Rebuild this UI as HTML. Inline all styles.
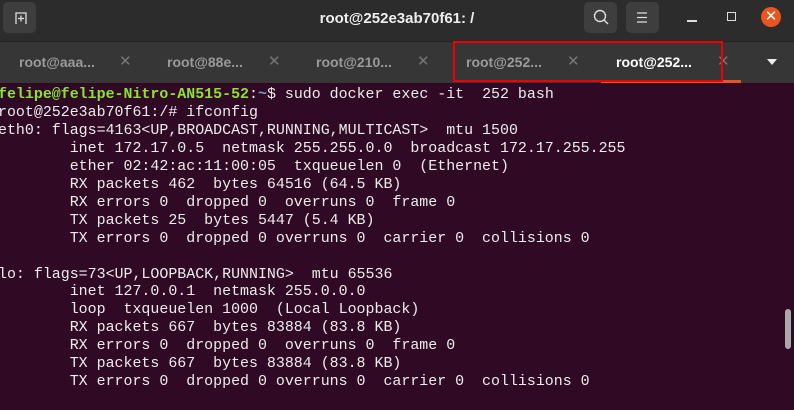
<!DOCTYPE html><html><head><style>
body{margin:0;width:794px;height:410px;overflow:hidden;background:#300a24;font-family:"Liberation Sans",sans-serif;position:relative}
.hdr{position:absolute;left:0;top:0;width:794px;height:41px;background:#2c2c2c}
.tabs{position:absolute;left:0;top:41px;width:794px;height:41px;background:#363636;border-top:1px solid #222}
.btn{position:absolute;top:2px;width:33px;height:31px;background:#3e3e3e;border-radius:5px}
.title{position:absolute;top:10px;left:0;width:794px;text-align:center;color:#eee;font-weight:bold;font-size:15px}
.tab{position:absolute;top:12px;color:#9a9a9a;font-weight:bold;font-size:14px}
.x{position:absolute;top:10px;color:#777;font-size:15px}
pre{position:absolute;left:-2px;top:87px;margin:0;font-family:"Liberation Mono",monospace;font-size:14.95px;line-height:17.95px;color:#ececec}
.g{color:#8ae234;font-weight:bold}.b{color:#729fcf;font-weight:bold}
</style></head><body>
<div class="hdr">
<div class="btn" style="left:3px"><svg width="33" height="31"><path d="M13 22V11h10v11M15 16.5h6M18 13.5v6" stroke="#ddd" stroke-width="1.3" fill="none"/></svg></div>
<div class="title">root@252e3ab70f61: /</div>
<div class="btn" style="left:584px"><svg width="33" height="31"><circle cx="16" cy="14" r="5.5" stroke="#ddd" stroke-width="1.4" fill="none"/><path d="M20 18l4 4" stroke="#ddd" stroke-width="1.4"/></svg></div>
<div class="btn" style="left:626px"><svg width="33" height="31"><path d="M11 11h10M11 15.5h10M11 20h10" stroke="#ddd" stroke-width="1.3"/></svg></div>
<div style="position:absolute;left:687px;top:20px;width:10px;height:1.5px;background:#ddd"></div>
<div style="position:absolute;left:727px;top:12px;width:7px;height:7px;border:1.5px solid #ddd"></div>
<div style="position:absolute;left:761px;top:7px;width:20px;height:20px;border-radius:50%;background:#e95420;color:#fff;text-align:center;font-size:15px;line-height:20px">✕</div>
</div>
<div class="tabs">
<div class="tab" style="left:19px">root@aaa...</div><div class="x" style="left:119px">✕</div>
<div class="tab" style="left:167px">root@88e...</div><div class="x" style="left:268px">✕</div>
<div class="tab" style="left:316px">root@210...</div><div class="x" style="left:417px">✕</div>
<div class="tab" style="left:466px">root@252...</div><div class="x" style="left:567px">✕</div>
<div class="tab" style="left:616px;color:#fff">root@252...</div><div class="x" style="left:717px">✕</div>
<div style="position:absolute;left:601px;top:38px;width:140px;height:3px;background:#e95420"></div>
<div style="position:absolute;left:767px;top:17px;border:5px solid transparent;border-top:6px solid #eee;border-bottom:0"></div>
<div style="position:absolute;left:453px;top:-1px;width:266px;height:37px;border:2px solid #e00"></div>
</div>
<pre><span class="g">felipe@felipe-Nitro-AN515-52</span>:<span class="b">~</span>$ sudo docker exec -it  252 bash
root@252e3ab70f61:/# ifconfig
eth0: flags=4163&lt;UP,BROADCAST,RUNNING,MULTICAST&gt;  mtu 1500
        inet 172.17.0.5  netmask 255.255.0.0  broadcast 172.17.255.255
        ether 02:42:ac:11:00:05  txqueuelen 0  (Ethernet)
        RX packets 462  bytes 64516 (64.5 KB)
        RX errors 0  dropped 0  overruns 0  frame 0
        TX packets 25  bytes 5447 (5.4 KB)
        TX errors 0  dropped 0 overruns 0  carrier 0  collisions 0

lo: flags=73&lt;UP,LOOPBACK,RUNNING&gt;  mtu 65536
        inet 127.0.0.1  netmask 255.0.0.0
        loop  txqueuelen 1000  (Local Loopback)
        RX packets 667  bytes 83884 (83.8 KB)
        RX errors 0  dropped 0  overruns 0  frame 0
        TX packets 667  bytes 83884 (83.8 KB)
        TX errors 0  dropped 0 overruns 0  carrier 0  collisions 0
</pre>
<div style="position:absolute;left:785px;top:309px;width:6px;height:40px;border-radius:3px;background:#aaa"></div>
</body></html>
